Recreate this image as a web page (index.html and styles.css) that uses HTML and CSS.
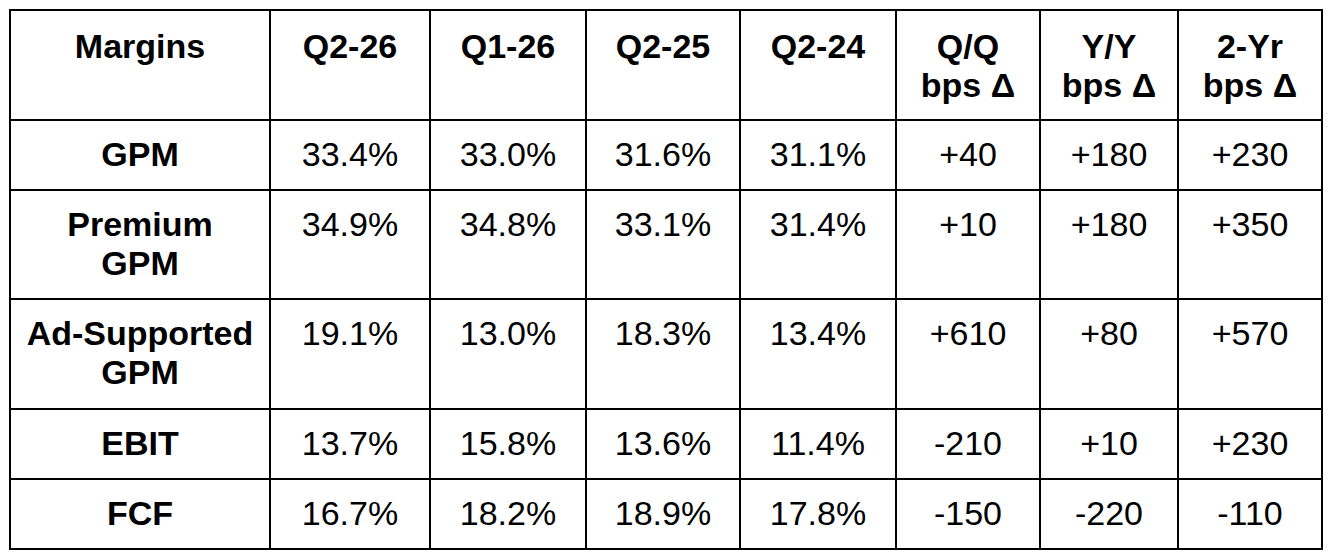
FILE: index.html
```html
<!DOCTYPE html>
<html lang="en">
<head>
<meta charset="utf-8">
<title>Margins</title>
<link rel="stylesheet" href="styles.css">
</head>
<body>
<table class="margins">
  <colgroup>
    <col class="c-label">
    <col class="c-q1">
    <col class="c-q2">
    <col class="c-q3">
    <col class="c-q4">
    <col class="c-d1">
    <col class="c-d2">
    <col class="c-d3">
  </colgroup>
  <thead>
    <tr class="head">
      <th>Margins</th>
      <th>Q2-26</th>
      <th>Q1-26</th>
      <th>Q2-25</th>
      <th>Q2-24</th>
      <th>Q/Q<br>bps Δ</th>
      <th>Y/Y<br>bps Δ</th>
      <th>2-Yr<br>bps Δ</th>
    </tr>
  </thead>
  <tbody>
    <tr>
      <th>GPM</th>
      <td>33.4%</td><td>33.0%</td><td>31.6%</td><td>31.1%</td>
      <td>+40</td><td>+180</td><td>+230</td>
    </tr>
    <tr>
      <th>Premium<br>GPM</th>
      <td>34.9%</td><td>34.8%</td><td>33.1%</td><td>31.4%</td>
      <td>+10</td><td>+180</td><td>+350</td>
    </tr>
    <tr class="tall">
      <th>Ad-Supported<br>GPM</th>
      <td>19.1%</td><td>13.0%</td><td>18.3%</td><td>13.4%</td>
      <td>+610</td><td>+80</td><td>+570</td>
    </tr>
    <tr>
      <th>EBIT</th>
      <td>13.7%</td><td>15.8%</td><td>13.6%</td><td>11.4%</td>
      <td>-210</td><td>+10</td><td>+230</td>
    </tr>
    <tr>
      <th>FCF</th>
      <td>16.7%</td><td>18.2%</td><td>18.9%</td><td>17.8%</td>
      <td>-150</td><td>-220</td><td>-110</td>
    </tr>
  </tbody>
</table>
</body>
</html>
```

FILE: styles.css
```css
html, body {
  margin: 0;
  padding: 0;
  background: #ffffff;
}

body {
  padding: 9px 0 0 9px;
  font-family: "Liberation Sans", Arial, sans-serif;
  color: #000000;
}

.margins {
  table-layout: fixed;
  width: 1314px;
  border-collapse: separate;
  border-spacing: 0;
  border-top: 2px solid #000;
  border-left: 2px solid #000;
  font-size: 34px;
  line-height: 39px;
}

.c-label { width: 260px; }
.c-q1 { width: 160px; }
.c-q2 { width: 156px; }
.c-q3 { width: 154px; }
.c-q4 { width: 156px; }
.c-d1 { width: 144px; }
.c-d2 { width: 138px; }
.c-d3 { width: 144px; }

.margins th,
.margins td {
  border-right: 2px solid #000;
  border-bottom: 2px solid #000;
  padding: 14px 4px 15px;
  text-align: center;
  vertical-align: top;
  white-space: nowrap;
}

.margins th {
  font-weight: bold;
}

.margins td {
  font-weight: normal;
}

.head th {
  padding-top: 16px;
  padding-bottom: 14px;
}

.tall th,
.tall td {
  padding-bottom: 16px;
}
```
